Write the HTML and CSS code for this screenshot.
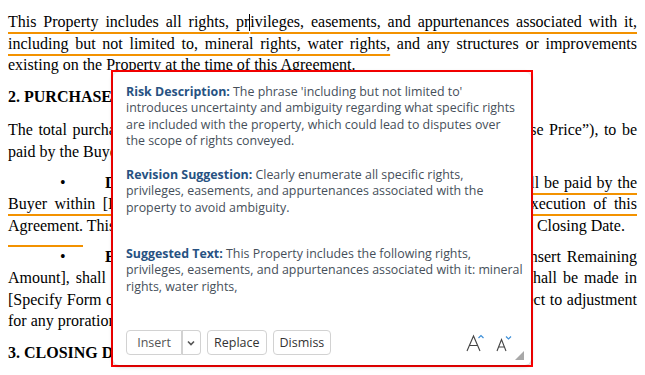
FILE: index.html
```html
<!DOCTYPE html>
<html lang="en">
<head>
  <meta charset="UTF-8">
  <title>Contract Review</title>
  <link rel="stylesheet" href="styles.css">
</head>
<body>
  <!-- Document -->
  <div class="doc">
    <p><span class="hl">This Property includes all rights, pr<span class="caret"></span>ivileges, easements, and appurtenances associated with it, including but not limited to, mineral rights, water rights,</span> and any structures or improvements existing on the Property at the time of this Agreement.</p>

    <h2>2. PURCHASE PRICE</h2>

    <p>The total purchase price for the Property shall be [Insert Amount] (the &ldquo;Purchase Price&rdquo;), to be paid by the Buyer as follows:</p>

    <p class="bullet"><span class="dot">&bull;</span><b>Deposit:</b> An initial earnest money deposit of <span class="hl">[Insert Amount] shall be paid by the Buyer within [Insert Number] business days following the full and mutual execution of this</span> <span class="low">Agreement.</span> This deposit shall be credited in full towards the Purchase Price at the Closing Date.</p>

    <p class="bullet"><span class="dot">&bull;</span><b>Balance:</b> The remaining balance of the Purchase Price, being [Insert Remaining Amount], shall be paid in full by the Buyer upon the Closing Date. Payment shall be made in [Specify Form of Payment, e.g., electronic wire transfer or certified funds], subject to adjustment for any prorations as provided herein.</p>

    <h2>3. CLOSING DATE</h2>
  </div>

  <!-- Review Popup -->
  <div class="popup">
    <div class="card">
      <div class="section">
        <span class="label">Risk Description:</span> The phrase 'including but not limited to'<br>
        introduces uncertainty and ambiguity regarding what specific rights<br>
        are included with the property, which could lead to disputes over<br>
        the scope of rights conveyed.
      </div>
      <div class="section">
        <span class="label">Revision Suggestion:</span> Clearly enumerate all specific rights,<br>
        privileges, easements, and appurtenances associated with the<br>
        property to avoid ambiguity.
      </div>
      <div class="section suggested">
        <span class="label">Suggested Text:</span> This Property includes the following rights,<br>
        privileges, easements, and appurtenances associated with it: mineral<br>
        rights, water rights,
      </div>

      <div class="footer">
        <div class="split">
          <button class="btn insert">Insert</button>
          <button class="btn more">
            <svg width="8" height="6" viewBox="0 0 8 6"><path d="M1 1.5 L4 4.5 L7 1.5" fill="none" stroke="#555" stroke-width="1.6"/></svg>
          </button>
        </div>
        <button class="btn">Replace</button>
        <button class="btn">Dismiss</button>

        <div class="sizes">
          <svg class="grow" width="20" height="18" viewBox="0 0 20 18">
            <path d="M1 17 L7.5 2 L14 17 M3.6 11.5 H11.4" fill="none" stroke="#444" stroke-width="1.1"/>
            <path d="M12.5 4 L15 1.5 L17.5 4" fill="none" stroke="#3d8fd8" stroke-width="1.2"/>
          </svg>
          <svg class="shrink" width="16" height="17" viewBox="0 0 16 17">
            <path d="M1 16 L5.5 4.5 L10 16 M2.8 12 H8.2" fill="none" stroke="#444" stroke-width="1.1"/>
            <path d="M10 1.5 L12.5 4 L15 1.5" fill="none" stroke="#3d8fd8" stroke-width="1.2"/>
          </svg>
        </div>
      </div>
      <div class="grip"></div>
    </div>
  </div>
</body>
</html>
```

FILE: styles.css
```css
body {
  margin: 0;
  background-color: white;
  color: black;
}

/* Document */
.doc {
  padding: 11px 8px 0 8px;
  font-family: 'Liberation Serif', 'Times New Roman', serif;
  font-size: 16px;
  line-height: 21.5px;
  text-align: justify;
}

.doc p {
  margin: 0 0 9.5px 0;
}

.doc h2 {
  font-size: 16px;
  margin: 10px 0 12px 0;
  text-align: left;
}

.bullet {
  text-indent: 52px;
}

.dot {
  display: inline-block;
  width: 45px;
  text-indent: 0;
}

.hl {
  text-decoration: underline;
  text-decoration-color: #f39200;
  text-decoration-thickness: 2px;
  text-underline-offset: 5px;
}

/* underline that sits lower, under the wrapped word */
.low {
  border-bottom: 2px solid #f39200;
  padding-bottom: 11px;
}

.caret {
  display: inline-block;
  width: 0;
  height: 17px;
  border-left: 1px solid black;
  vertical-align: -4px;
}

/* Popup */
.popup {
  position: absolute;
  left: 111px;
  top: 70px;
  width: 418px;
  height: 293px;
  border: 2px solid #ff0000;
  background: white;
}

.card {
  position: relative;
  height: 100%;
  box-sizing: border-box;
  padding: 12px 13px 10px 13px;
  border-radius: 6px;
  box-shadow: 0 1px 4px rgba(0, 0, 0, 0.28);
  display: flex;
  flex-direction: column;
  font-family: 'Open Sans', 'Noto Sans', sans-serif;
  font-size: 12.4px;
  line-height: 16.3px;
  color: #464f5a;
  white-space: nowrap;
}

.section {
  margin-bottom: 18px;
}

.section.suggested {
  margin-top: 12px;
}

.label {
  font-weight: bold;
  color: #275282;
}

/* Footer buttons */
.footer {
  margin-top: auto;
  display: flex;
  align-items: center;
  gap: 6px;
}

.btn {
  height: 25px;
  padding: 0 6px;
  border: 1px solid #d2d2d2;
  border-radius: 4px;
  background: white;
  font-family: 'Open Sans', 'Noto Sans', sans-serif;
  font-size: 12.5px;
  color: #333;
  cursor: pointer;
}

.split {
  display: flex;
}

.split .insert {
  width: 56px;
  border-radius: 4px 0 0 4px;
  color: #555;
}

.split .more {
  width: 19px;
  padding: 0;
  border-left: none;
  border-radius: 0 4px 4px 0;
  display: flex;
  align-items: center;
  justify-content: center;
  position: relative;
}

.split .more::before {
  content: "";
  position: absolute;
  left: 0;
  top: 0;
  bottom: 0;
  border-left: 1px solid #d2d2d2;
}

.sizes {
  margin-left: auto;
  margin-right: 6px;
  display: flex;
  align-items: flex-end;
  gap: 10px;
}

.grip {
  position: absolute;
  right: 7px;
  bottom: 5px;
  width: 0;
  height: 0;
  border-left: 9px solid transparent;
  border-bottom: 9px solid #a8a8a8;
}
```
